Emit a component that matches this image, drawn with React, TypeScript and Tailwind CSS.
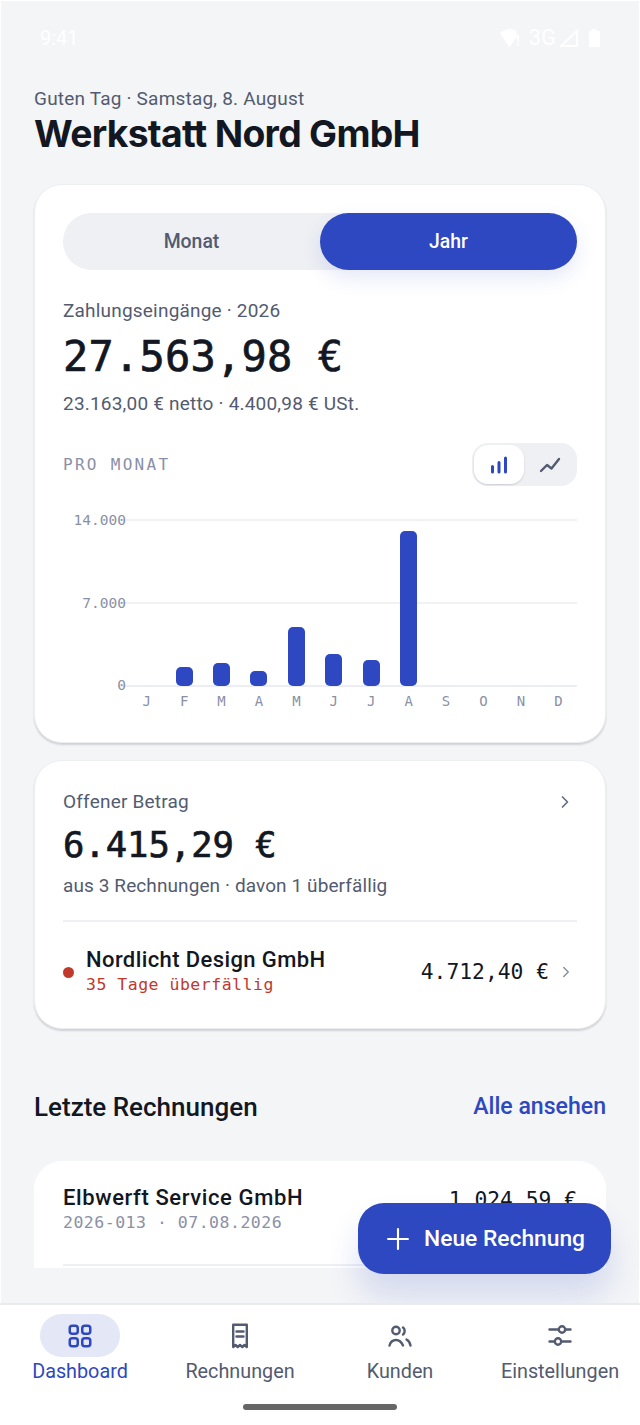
import React from "react";
import { Plus, ChevronRight } from "lucide-react";

const mono = "font-['DejaVu_Sans_Mono','Liberation_Mono',monospace]";
const heavy = "[-webkit-text-stroke:0.7px_#131722]";
const bars = [0, 19, 23, 15, 59, 32, 26, 155, 0, 0, 0, 0];
const months = ["J", "F", "M", "A", "M", "J", "J", "A", "S", "O", "N", "D"];
const body = "text-[19px] leading-6 tracking-[0.2px] text-[#535b70]";

function Receipt() {
  return (
    <svg width="24" height="28" viewBox="0 0 24 28" fill="none" stroke="#535b70" strokeWidth="2.400" strokeLinejoin="round" strokeLinecap="round">
      <path d="M5.200 2.700H18.800V25l-2.300-2-2.200 2-2.300-2-2.300 2-2.200-2-2.300 2z" />
      <path d="M8.500 9.500h7M8.500 14.500h7" />
    </svg>
  );
}

function GridIcon() {
  return (
    <svg width="24" height="24" viewBox="0 0 24 24" fill="none" stroke="#2d48c0" strokeWidth="2.500">
      <rect x="1.750" y="1.750" width="8" height="8" rx="2.500" /><rect x="14.250" y="1.750" width="8" height="8" rx="2.500" />
      <rect x="1.750" y="14.250" width="8" height="8" rx="2.500" /><rect x="14.250" y="14.250" width="8" height="8" rx="2.500" />
    </svg>
  );
}

function PeopleIcon() {
  return (
    <svg width="24" height="24" viewBox="0 0 24 24" fill="none" stroke="#535b70" strokeWidth="2.400" strokeLinecap="round">
      <circle cx="8" cy="6.500" r="3.700" />
      <path d="M15 3.500c2.200 1.500 2.200 5.500 0 7" />
      <path d="M1.500 21.500c1-3.500 3.500-5.500 6.500-5.500s5.500 2 7 5.500" />
      <path d="M18.500 15.500c2 1 3.500 3.500 4 6" />
    </svg>
  );
}

function TuneIcon() {
  return (
    <svg width="24" height="24" viewBox="0 0 24 24" fill="none" stroke="#535b70" strokeWidth="2.400" strokeLinecap="round">
      <path d="M1.500 5.500h9M17.500 5.500h5" /><circle cx="14" cy="5.500" r="3.200" />
      <path d="M1.500 17.500h5M13.500 17.500h9" /><circle cx="10" cy="17.500" r="3.200" />
    </svg>
  );
}

function NavItem({ label, active, children }: { label: string; active?: boolean; children: React.ReactNode }) {
  return (
    <div className="flex w-40 flex-col items-center">
      <div className={`flex h-[43px] w-20 items-center justify-center rounded-full ${active ? "bg-[#e4e8f6]" : ""}`}>{children}</div>
      <div className={`mt-[3px] text-[19.800px] leading-6 ${active ? "text-[#2d48c0]" : "text-[#535b70]"}`}>{label}</div>
    </div>
  );
}

export default function App() {
  return (
    <div className="relative flex h-[1425px] w-[640px] flex-col overflow-hidden bg-white font-['Roboto',sans-serif]">
      <div className="relative h-[1303px] bg-[#f4f5f7] shadow-[inset_1px_1px_0_#fff,inset_-1px_0_0_#fff]">
        <div className="flex h-[87px] items-start justify-between pl-[40px] pr-[40px] pt-[24px] text-[22px] leading-7 text-white">
          <span className="text-[20px]">9:41</span>
          <div className="flex items-center gap-[6px]">
            <svg width="20" height="18" viewBox="0 0 20 18" fill="white"><path d="M0 4.500C3 1.500 6.500 0 9.500 0c2.500 0 5 .8 7 2v6l-7 10z" /><rect x="17" y="6" width="2" height="7" /><rect x="17" y="14.500" width="2" height="2" /></svg>
            <span className="ml-[3px] mr-[-2px]">3G</span>
            <svg width="18" height="18" viewBox="0 0 18 18" fill="none" stroke="white" strokeWidth="2"><path d="M17 2v15H1z" /></svg>
            <svg width="12" height="18" viewBox="0 0 12 18" fill="white" className="ml-[4px]"><path d="M3.500 0h5v2H12v16H1V2h2.500z" /></svg>
          </div>
        </div>
        <div className="px-[34px]">
          <div className={body}>Guten Tag · Samstag, 8. August</div>
          <h1 className="mt-[1px] font-['Inter',sans-serif] text-[37.300px] font-bold leading-[44px] tracking-[-0.7px] text-[#131722]">Werkstatt Nord GmbH</h1>

          <section className="mt-[28px] h-[559px] rounded-[28px] border border-[#eceef1] bg-white px-[28px] pt-[28px] shadow-[0_2px_2px_rgba(20,25,40,0.16)]">
            <div className="relative flex h-[57px] rounded-full bg-[#eff0f4]">
              <div className="flex flex-1 items-center justify-center pt-[1px] text-[19.400px] font-medium text-[#535b70]">Monat</div>
              <div className="flex flex-1 items-center justify-center rounded-full bg-[#2d48c0] pt-[1px] text-[19.400px] font-medium text-white shadow-[0_8px_20px_rgba(45,72,192,0.12)]">Jahr</div>
            </div>
            <div className={`mt-[29px] ${body}`}>Zahlungseingänge · 2026</div>
            <div className={`${mono} ${heavy} mt-[9px] text-[42px] leading-[50px] tracking-[0.2px] text-[#131722]`}>27.563,98 €</div>
            <div className={`mt-[10px] ${body}`}>23.163,00 € netto · 4.400,98 € USt.</div>
            <div className="mt-[27px] flex items-center justify-between">
              <span className={`${mono} text-[16px] tracking-[2.300px] text-[#8a90a6]`}>PRO MONAT</span>
              <div className="flex h-[43px] w-[105px] items-center rounded-[16px] bg-[#eff0f4] p-[2px]">
                <div className="flex h-[39px] w-[50px] items-center justify-center rounded-[14px] bg-white shadow-[0_1px_2px_rgba(20,25,40,0.16)]">
                  <svg width="20" height="20" viewBox="0 0 20 20" stroke="#2d48c0" strokeWidth="3" strokeLinecap="round"><path d="M3.500 11.500v5.500M10 7.500v9.500M16.500 3v14" /></svg>
                </div>
                <div className="flex flex-1 items-center justify-center">
                  <svg width="22" height="20" viewBox="0 0 22 20" fill="none" stroke="#535b70" strokeWidth="2.400" strokeLinecap="round" strokeLinejoin="round"><path d="M2 16l6-6 4.500 3.500L20 4" /></svg>
                </div>
              </div>
            </div>
            <div className="relative mt-[12px] h-[190px]">
              <div className="absolute left-[55px] right-0 top-[21px] h-[2px] bg-[#f1f2f6]" />
              <div className="absolute left-[55px] right-0 top-[104px] h-[2px] bg-[#f1f2f6]" />
              <div className="absolute left-[55px] right-0 top-[187px] h-[2px] bg-[#eceef3]" />
              {[["14.000", 12], ["7.000", 95], ["0", 177]].map(([t, y]) => (
                <span key={t as string} className={`${mono} absolute right-[451px] text-[14.500px] leading-5 text-[#8a90a6]`} style={{ top: y as number }}>{t}</span>
              ))}
              <div className="absolute bottom-[2px] left-[65px] right-0 flex h-[165px] items-end">
                {bars.map((h, i) => (
                  <div key={i} className="flex flex-1 justify-center">
                    {h > 0 && <div className="w-[17px] rounded-[5px] bg-[#2d48c0]" style={{ height: h }} />}
                  </div>
                ))}
              </div>
            </div>
            <div className="ml-[65px] mt-[3px] flex">
              {months.map((m, i) => (
                <span key={i} className={`${mono} flex-1 text-center text-[14px] leading-5 text-[#8a90a6]`}>{m}</span>
              ))}
            </div>
          </section>

          <section className="mt-[17px] h-[269px] rounded-[28px] border border-[#eceef1] bg-white px-[28px] pt-[29px] shadow-[0_2px_2px_rgba(20,25,40,0.16)]">
            <div className="flex items-center justify-between">
              <span className={body}>Offener Betrag</span>
              <ChevronRight size={20} className="mr-[2px] text-[#636b80]" />
            </div>
            <div className={`${mono} ${heavy} mt-[9px] text-[35.500px] leading-[44px] text-[#131722]`}>6.415,29 €</div>
            <div className="mt-[7px] text-[19px] leading-6 tracking-[0.1px] text-[#535b70]">aus 3 Rechnungen · davon 1 überfällig</div>
            <div className="mt-[22px] h-[2px] bg-[#eff0f4]" />
            <div className="mt-[25px] flex items-center">
              <div className="h-[11px] w-[11px] rounded-full bg-[#c0392b]" />
              <div className="ml-[12px] flex-1">
                <div className="text-[22px] font-medium leading-[25px] tracking-[0.4px] text-[#131722]">Nordlicht Design GmbH</div>
                <div className={`${mono} mt-[1px] text-[16.500px] leading-[24px] tracking-[0.5px] text-[#c0392b]`}>35 Tage überfällig</div>
              </div>
              <span className={`${mono} text-[21.300px] font-medium text-[#131722]`}>4.712,40 €</span>
              <ChevronRight size={18} className="ml-[8px] mr-[2px] text-[#8a90a6]" />
            </div>
          </section>

          <div className="mt-[61px] flex items-center justify-between">
            <h2 className="text-[26px] font-medium leading-8 text-[#131722]">Letzte Rechnungen</h2>
            <span className="text-[23.100px] font-medium text-[#2d48c0]">Alle ansehen</span>
          </div>

          <section className="mt-[36px] h-[107px] overflow-hidden rounded-t-[28px] bg-white px-[29px] pt-[23px]">
            <div className="flex items-start justify-between">
              <div>
                <div className="text-[22px] font-medium leading-[28px] tracking-[0.6px] text-[#131722]">Elbwerft Service GmbH</div>
                <div className={`${mono} text-[16.500px] leading-[22px] tracking-[0.5px] text-[#8a90a6]`}>2026-013 · 07.08.2026</div>
              </div>
              <span className={`${mono} text-[21.300px] font-medium text-[#131722]`}>1.024,59 €</span>
            </div>
            <div className="mt-[30px] h-[2px] bg-[#eff0f4]" />
          </section>
        </div>

        <div className="absolute left-[358px] top-[1203px] flex h-[71px] w-[253px] items-center gap-[9px] rounded-[26px] bg-[#2d48c0] pl-[23px] pt-[1px] text-white shadow-[0_22px_32px_rgba(45,72,192,0.16)]">
          <Plus size={34} strokeWidth={1.500} />
          <span className="text-[22.800px] font-medium">Neue Rechnung</span>
        </div>
      </div>

      <nav className="relative z-10 h-[122px] border-t-2 border-[#e8eaef] bg-white pt-[9px]">
        <div className="flex">
          <NavItem label="Dashboard" active><GridIcon /></NavItem>
          <NavItem label="Rechnungen"><Receipt /></NavItem>
          <NavItem label="Kunden"><PeopleIcon /></NavItem>
          <NavItem label="Einstellungen"><TuneIcon /></NavItem>
        </div>
        <div className="mx-auto mt-[20px] h-[6px] w-[154px] rounded-full bg-[#666]" />
      </nav>
    </div>
  );
}
